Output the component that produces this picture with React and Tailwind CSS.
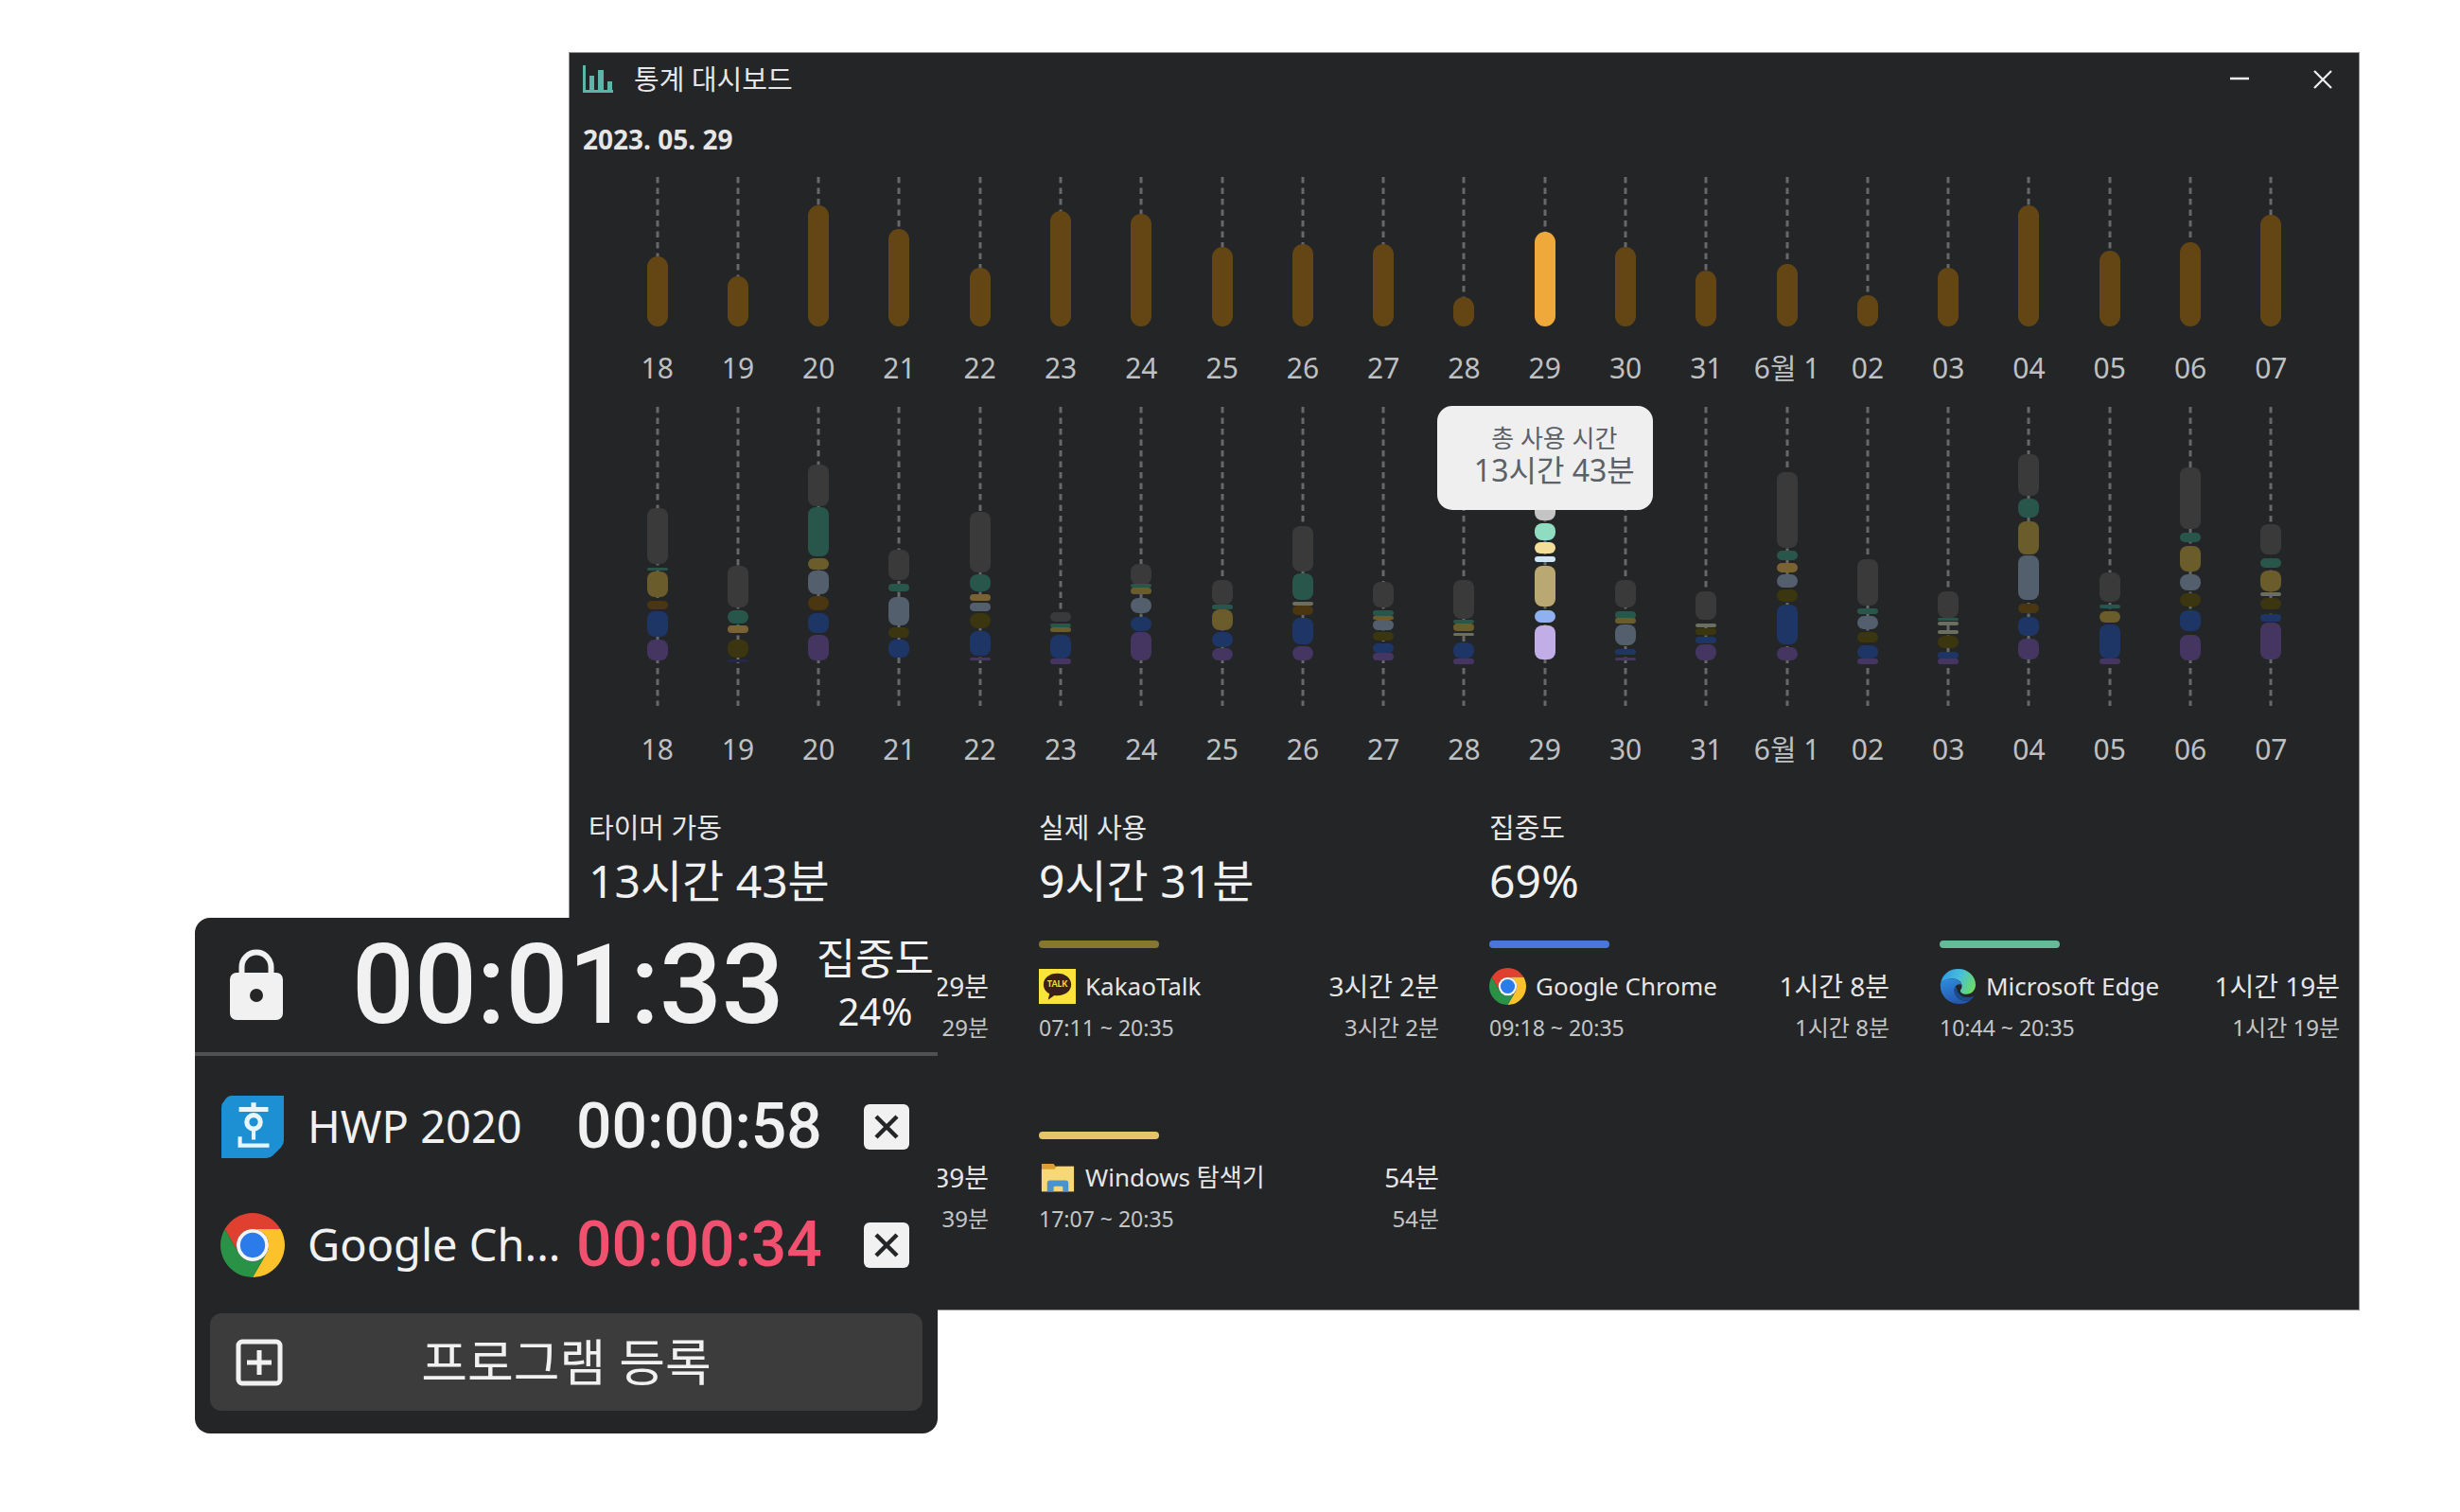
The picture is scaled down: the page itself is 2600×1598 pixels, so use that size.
import { useState } from 'react';

const C = {
    gray: '#3a3a3a',
    green: '#28564a',
    yellow: '#6b5c2c',
    orange: '#7a6235',
    slate: '#535f6d',
    brown: '#4a3610',
    olive: '#3b360f',
    blue: '#1e3666',
    purple: '#453661',
    pale: '#6c6f60'
};

// usage: height of the total bar, apps: [top, height, color] of every app segment
const days = [
    { label: '18', usage: 74, apps: [[108, 59, C.gray], [171, 3, C.green], [175, 27, C.yellow], [206, 9, C.brown], [217, 27, C.blue], [247, 22, C.purple]] },
    { label: '19', usage: 53, apps: [[169, 44, C.gray], [216, 14, C.green], [232, 8, C.orange], [247, 19, C.olive], [268, 3, '#26254a']] },
    { label: '20', usage: 128, apps: [[62, 44, C.gray], [107, 52, C.green], [161, 12, C.yellow], [174, 25, C.slate], [201, 15, C.brown], [219, 21, C.blue], [242, 27, C.purple]] },
    { label: '21', usage: 103, apps: [[152, 32, C.gray], [188, 8, C.green], [202, 30, C.slate], [234, 11, C.olive], [247, 19, C.blue]] },
    { label: '22', usage: 62, apps: [[112, 64, C.gray], [178, 18, C.green], [199, 7, C.orange], [208, 9, C.slate], [219, 16, C.olive], [238, 26, C.blue], [266, 3, C.purple]] },
    { label: '23', usage: 122, apps: [[218, 10, C.gray], [230, 4, C.green], [234, 5, C.yellow], [242, 25, C.blue], [267, 6, C.purple]] },
    { label: '24', usage: 119, apps: [[167, 22, C.gray], [188, 4, C.green], [192, 7, C.yellow], [203, 16, C.slate], [223, 15, C.blue], [239, 30, C.purple]] },
    { label: '25', usage: 84, apps: [[184, 26, C.gray], [210, 5, C.green], [215, 22, C.yellow], [239, 16, C.blue], [256, 13, C.purple]] },
    { label: '26', usage: 87, apps: [[127, 48, C.gray], [177, 28, C.green], [207, 4, C.pale], [211, 10, C.brown], [224, 28, C.blue], [254, 15, C.purple]] },
    { label: '27', usage: 87, apps: [[186, 27, C.gray], [216, 6, C.green], [222, 4, C.yellow], [226, 11, C.slate], [239, 9, C.olive], [251, 10, C.blue], [261, 8, C.purple]] },
    { label: '28', usage: 31, apps: [[184, 41, C.gray], [226, 4, C.green], [230, 8, C.yellow], [240, 3, C.pale], [250, 17, C.blue], [267, 6, C.purple]] },
    { label: '29', usage: 100, apps: [[90, 31, '#c4c4c4'], [124, 18, '#8fdcc0'], [144, 12, '#f3dd98'], [159, 6, '#cfe5f4'], [169, 43, '#b9a872'], [216, 13, '#8fb1f0'], [232, 36, '#c2aee6']] },
    { label: '30', usage: 84, apps: [[184, 29, C.gray], [217, 8, C.green], [224, 6, C.yellow], [231, 22, C.slate], [257, 6, C.blue], [266, 3, C.purple]] },
    { label: '31', usage: 59, apps: [[196, 30, C.gray], [230, 4, C.pale], [235, 7, C.olive], [244, 7, C.blue], [252, 17, C.purple]] },
    { label: '6월 1', usage: 66, apps: [[70, 80, C.gray], [153, 10, C.green], [166, 10, C.orange], [178, 14, C.slate], [194, 13, C.olive], [210, 42, C.blue], [255, 14, C.purple]] },
    { label: '02', usage: 33, apps: [[162, 49, C.gray], [214, 6, C.green], [222, 14, C.slate], [239, 11, C.olive], [253, 14, C.blue], [267, 6, C.purple]] },
    { label: '03', usage: 62, apps: [[196, 28, C.gray], [224, 3, C.green], [228, 4, C.pale], [237, 4, C.pale], [243, 13, C.olive], [260, 7, C.blue], [267, 6, C.purple]] },
    { label: '04', usage: 128, apps: [[51, 44, C.gray], [98, 20, C.green], [122, 35, C.yellow], [158, 47, C.slate], [209, 10, C.brown], [223, 20, C.blue], [246, 22, C.purple]] },
    { label: '05', usage: 80, apps: [[176, 31, C.gray], [210, 4, C.green], [217, 12, C.yellow], [231, 36, C.blue], [267, 6, C.purple]] },
    { label: '06', usage: 89, apps: [[65, 65, C.gray], [134, 10, C.green], [148, 27, C.yellow], [178, 17, C.slate], [198, 14, C.olive], [216, 22, C.blue], [242, 27, C.purple]] },
    { label: '07', usage: 118, apps: [[125, 32, C.gray], [161, 10, C.green], [174, 22, C.yellow], [197, 4, C.pale], [203, 12, C.olive], [220, 8, C.blue], [229, 39, C.purple]] }
];

const summary = [
    { label: '타이머 가동', value: '13시간 43분' },
    { label: '실제 사용', value: '9시간 31분' },
    { label: '집중도', value: '69%' }
];

const usages = [
    { id: 1, total: '29분', active: '29분' },
    { id: 2, name: 'KakaoTalk', icon: KakaoIcon, bar: 'bg-[#85772d]', range: '07:11 ~ 20:35', total: '3시간 2분', active: '3시간 2분' },
    { id: 3, name: 'Google Chrome', icon: ChromeIcon, bar: 'bg-[#4777d9]', range: '09:18 ~ 20:35', total: '1시간 8분', active: '1시간 8분' },
    { id: 4, name: 'Microsoft Edge', icon: EdgeIcon, bar: 'bg-[#63bb98]', range: '10:44 ~ 20:35', total: '1시간 19분', active: '1시간 19분' },
    { id: 5, total: '39분', active: '39분' },
    { id: 6, name: 'Windows 탐색기', icon: FolderIcon, bar: 'bg-[#e6c468]', range: '17:07 ~ 20:35', total: '54분', active: '54분' }
];

function StatsIcon({ className }) {
    return (
        <svg viewBox="0 0 32 30" className={className} fill="#5cb5a9" aria-hidden="true">
            <path d="M0 0h3v26h29v3H0z" />
            <path d="M7 11h5v15H7zM16 5h6v21h-6zM26 17h5v9h-5z" />
        </svg>
    );
}

function ChromeIcon({ className }) {
    const arm = 'M24 12h20.78A24 24 0 0 0 3.22 12l10.39 18A12 12 0 0 1 24 12z';
    return (
        <svg viewBox="0 0 48 48" className={className} aria-hidden="true">
            <path d={arm} fill="#e0402f" />
            <path d={arm} fill="#fbc22b" transform="rotate(120 24 24)" />
            <path d={arm} fill="#2a9247" transform="rotate(240 24 24)" />
            <circle cx="24" cy="24" r="12" fill="#f4f4f4" />
            <circle cx="24" cy="24" r="9.3" fill="#2b7bea" />
        </svg>
    );
}

function KakaoIcon({ className }) {
    return (
        <svg viewBox="0 0 40 40" className={className} aria-hidden="true">
            <path d="M0 1h40v38H0z" fill="#fbe33a" />
            <path d="M20 6C11.500 6 5 11 5 18c0 4.500 2.600 8 6.500 10l-1.500 6.500 6.800-4.800c1 .2 2.100.3 3.200.3 8.500 0 15-5 15-12S28.500 6 20 6z" fill="#3a1f1a" />
            <text x="20" y="21" fontSize="9" fontWeight="900" textAnchor="middle" fill="#f3dc3c" fontFamily="Lato, sans-serif">TALK</text>
        </svg>
    );
}

function EdgeIcon({ className }) {
    return (
        <svg viewBox="0 0 40 40" className={className} aria-hidden="true">
            <defs>
                <linearGradient id="edgeTop" x1="0" y1="0.300" x2="1" y2="0.600">
                    <stop offset="0" stopColor="#2e9be0" />
                    <stop offset="0.500" stopColor="#48bede" />
                    <stop offset="1" stopColor="#6ddb62" />
                </linearGradient>
                <linearGradient id="edgeLeft" x1="0" y1="0" x2="0.400" y2="1">
                    <stop offset="0" stopColor="#2f8fdf" />
                    <stop offset="1" stopColor="#2457b0" />
                </linearGradient>
            </defs>
            <path d="M1 17C2.500 7 10.500 1 20 1c11 0 19 8 19 17 0 6.500-4.500 10.500-10 10.500-4.500 0-6.500-2-6.500-3.600 0-1.400 1.700-2.200 1.700-5.400 0-4-4-8-10-8C7.500 11.500 2.500 14 1 17z" fill="url(#edgeTop)" />
            <path d="M1 17c1.500-3.500 7-5.800 13-5.500 5.500.3 9.500 3.500 10.200 7-1.800-1.500-5.200-1-7 1.500-3 4.500-.5 11.500 5.800 14.500 3.500 1.600 8.500 1.300 11.500-.5C31.200 37.500 26 39.500 20 39 8.500 38.500-.5 28.500 1 17z" fill="url(#edgeLeft)" />
            <path d="M17.200 20c-3 4.500-.5 11.500 5.800 14.500 3.500 1.600 8.500 1.300 11.500-.5 1.300-1.200 2.300-2.400 2.800-3.600-8.300 3.100-16.300.6-18.300-6.400-.3-1.500-.6-2.800-1.800-4z" fill="#1b4a8e" />
        </svg>
    );
}

function FolderIcon({ className }) {
    return (
        <svg viewBox="0 0 40 40" className={className} aria-hidden="true">
            <path d="M3 5h13l2 3h20v27H3z" fill="#dca032" />
            <path d="M3 11h14l2-3h19v27H3z" fill="#f8d775" />
            <path d="M9 35V26q0-3 3-3h17q3 0 3 3v9h-6v-4q0-1.500-1.500-1.500h-7Q16 29.500 16 31v4z" fill="#4b93cc" />
        </svg>
    );
}

function HwpIcon({ className }) {
    return (
        <svg viewBox="0 0 66 66" className={className} fill="none" aria-hidden="true">
            <path d="M12 1h53v46q0 4-3 7l-8 8q-3 3-7 3H1V13q0-4 3-7 3-5 8-5z" fill="#1c90d3" />
            <path d="M34 8v8M19 15h30" stroke="#e9f5fc" strokeWidth="5" />
            <circle cx="34" cy="28" r="7" stroke="#e9f5fc" strokeWidth="5" />
            <path d="M34 36v10M20 43v9h30" stroke="#e9f5fc" strokeWidth="4" />
        </svg>
    );
}

function LockIcon({ className }) {
    return (
        <svg viewBox="0 0 58 76" className={className} fill="none" aria-hidden="true">
            <path d="M13.500 30V19a15.500 15.500 0 0 1 31 0v11" stroke="#f1f1f1" strokeWidth="6" />
            <rect x="1" y="25" width="56" height="50" rx="7" fill="#f1f1f1" />
            <circle cx="29" cy="49" r="7" fill="#232527" />
        </svg>
    );
}

function DayBar({ height, segments, radius }) {
    return (
        <svg width="22" height={height} viewBox={`0 0 22 ${height}`} aria-hidden="true">
            <line x1="11" y1="1" x2="11" y2={height} stroke="#66686a" strokeWidth="3" strokeDasharray="6.500 5" />
            {segments.map(([top, h, color]) => (
                <rect key={top} x="0" y={top} width="22" height={h} rx={Math.min(radius, h / 2)} fill={color} />
            ))}
        </svg>
    );
}

function UsageCard({ item }) {
    const Icon = item.icon;
    return (
        <div>
            <div className={`h-2 w-[127px] rounded-sm ${item.bar || ''}`} />
            <div className="mt-5 flex h-10 items-center justify-between">
                <div className="flex items-center gap-2.5">
                    {Icon && <Icon className="size-[39px]" />}
                    <span className="text-[26px]">{item.name}</span>
                </div>
                <span className="text-[28px]">{item.total}</span>
            </div>
            <div className="mt-2 flex h-8 items-center justify-between text-[#c4c5c6]">
                <span className="text-[23px]">{item.range}</span>
                <span className="text-[24px]">{item.active}</span>
            </div>
        </div>
    );
}

function Dashboard() {
    const selected = '29';

    return (
        <section className="border border-[#8f9192] bg-[#232527] pb-20 text-[#e6e6e6]">
            <header className="flex h-14 items-center justify-between pl-[14px] pr-7">
                <div className="flex items-center gap-[22px]">
                    <StatsIcon className="h-[30px] w-8" />
                    <h1 className="text-[29px]">통계 대시보드</h1>
                </div>
                <div className="flex items-center gap-[68px]">
                    <button type="button" aria-label="최소화">
                        <svg width="20" height="20" viewBox="0 0 20 20" stroke="#f0f0f0" strokeWidth="2.500"><path d="M0 9h20" /></svg>
                    </button>
                    <button type="button" aria-label="닫기">
                        <svg width="20" height="20" viewBox="0 0 20 20" stroke="#f0f0f0" strokeWidth="2.200"><path d="M1 1l18 18M19 1L1 19" /></svg>
                    </button>
                </div>
            </header>

            <div className="flex h-[70px] items-center pl-[14px]">
                <h2 className="text-[28px] font-bold">2023. 05. 29</h2>
            </div>

            <div className="grid grid-cols-[repeat(21,minmax(0,1fr))] px-[50px] pt-1">
                {days.map((day) => (
                    <div key={day.label} className="flex flex-col items-center">
                        <DayBar
                            height={159}
                            radius={11}
                            segments={[[159 - day.usage, day.usage, day.label === selected ? '#efa83a' : '#644614']]}
                        />
                        <span className="mt-[26px] whitespace-nowrap text-[30px] leading-9 text-[#bfc0c1]">{day.label}</span>
                    </div>
                ))}
            </div>

            <div className="mt-[22px] grid grid-cols-[repeat(21,minmax(0,1fr))] px-[50px]">
                {days.map((day) => (
                    <div key={day.label} className="relative flex flex-col items-center">
                        <DayBar height={317} radius={8} segments={day.apps} />
                        <span className="mt-7 whitespace-nowrap text-[30px] leading-9 text-[#bfc0c1]">{day.label}</span>
                        {day.label === selected && (
                            <div className="absolute left-1/2 top-0 z-10 flex h-[110px] w-[228px] -translate-x-1/2 flex-col items-center rounded-2xl bg-[#efefef] pl-5 pt-[18px] text-[#5b6167]">
                                <span className="text-[26px] leading-8">총 사용 시간</span>
                                <span className="text-[32px] leading-9">13시간 43분</span>
                            </div>
                        )}
                    </div>
                ))}
            </div>

            <div className="mt-[47px] grid grid-cols-4 gap-x-[53px] px-5">
                {summary.map((item) => (
                    <div key={item.label}>
                        <p className="text-[29px] leading-9">{item.label}</p>
                        <p className="mt-2 text-[48px] leading-[60px] text-[#f1f1f1]">{item.value}</p>
                    </div>
                ))}
            </div>

            <div className="mt-[33px] grid grid-cols-4 gap-x-[53px] gap-y-[94px] px-5">
                {usages.map((item) => (
                    <UsageCard key={item.id} item={item} />
                ))}
            </div>
        </section>
    );
}

function TimerRow({ icon: Icon, name, time, running, onRemove }) {
    return (
        <li className="flex h-[125px] items-center pl-[27px] pr-[30px]">
            <Icon className="size-[68px]" />
            <span className="ml-6 w-[284px] whitespace-nowrap text-[47px]">{name}</span>
            <span className={`font-[Roboto] text-[66px] font-medium leading-none ${running ? 'text-[#f2506f]' : 'text-[#f1f1f1]'}`}>{time}</span>
            <button type="button" onClick={onRemove} aria-label={`${name} 삭제`} className="ml-auto flex size-12 items-center justify-center rounded-md bg-[#f1f1f1]">
                <svg width="26" height="26" viewBox="0 0 26 26" stroke="#232527" strokeWidth="4.500"><path d="M2 2l22 22M24 2L2 24" /></svg>
            </button>
        </li>
    );
}

function TimerWidget() {
    const [programs, setPrograms] = useState([
        { name: 'HWP 2020', icon: HwpIcon, time: '00:00:58' },
        { name: 'Google Ch...', icon: ChromeIcon, time: '00:00:34', running: true }
    ]);

    const remove = (name) => setPrograms(programs.filter((p) => p.name !== name));

    return (
        <section className="absolute left-[206px] top-[970px] z-20 w-[785px] rounded-2xl bg-[#232527] pb-6 text-[#f1f1f1]">
            <header className="flex h-[146px] items-center border-b-4 border-[#505152] pl-9 pr-1">
                <button type="button" aria-label="잠금"><LockIcon className="h-[76px] w-[58px]" /></button>
                <span className="ml-[72px] font-[Roboto] text-[116px] font-medium leading-none">00:01:33</span>
                <div className="ml-auto flex flex-col items-center leading-[56px]">
                    <span className="text-[45px]">집중도</span>
                    <span className="text-[40px]">24%</span>
                </div>
            </header>
            <ul className="pt-3">
                {programs.map((p) => (
                    <TimerRow key={p.name} {...p} onRemove={() => remove(p.name)} />
                ))}
            </ul>
            <div className="px-4 pt-2.5">
                <button type="button" className="relative flex h-[103px] w-full items-center justify-center rounded-xl bg-[#3c3c3c] text-[53px]">
                    <svg width="50" height="50" viewBox="0 0 50 50" fill="none" stroke="#f1f1f1" className="absolute left-[27px]">
                        <rect x="3" y="3" width="44" height="44" rx="4" strokeWidth="5" />
                        <path d="M25 12v26M12 25h26" strokeWidth="5" />
                    </svg>
                    프로그램 등록
                </button>
            </div>
        </section>
    );
}

export default function App() {
    return (
        <main className="relative min-h-screen bg-white pb-[213px] pl-[601px] pr-[106px] pt-[55px] font-['Noto_Sans','Noto_Sans_CJK_KR',sans-serif]">
            <Dashboard />
            <TimerWidget />
        </main>
    );
}
